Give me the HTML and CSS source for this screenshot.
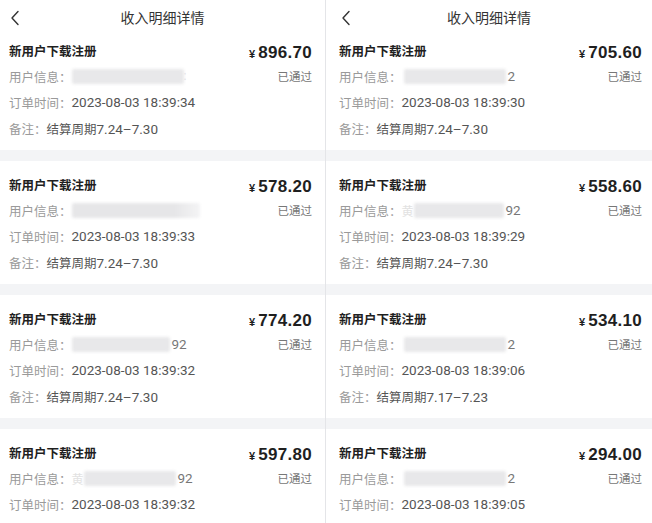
FILE: index.html
```html
<!DOCTYPE html>
<html lang="zh">
<head>
<meta charset="utf-8">
<link rel="stylesheet" href="styles.css">
</head>
<body>
<div class="screen">
  <section class="panel panel-left">
    <header class="topbar">
      <svg class="back" width="10" height="16" viewBox="0 0 10 16"><polyline points="8,1.5 2,8 8,14.5" fill="none" stroke="#333" stroke-width="1.4" stroke-linecap="round" stroke-linejoin="round"/></svg>
      <span class="title">收入明细详情</span>
    </header>
    <div class="card">
      <div class="row"><span class="name">新用户下载注册</span><span class="price"><span class="yen">¥</span>896.70</span></div>
      <div class="row"><span class="label">用户信息：</span><span class="blur b-a"></span><span class="tail faint">:</span><span class="status">已通过</span></div>
      <div class="row"><span class="label">订单时间：</span><span class="value">2023-08-03 18:39:34</span></div>
      <div class="row"><span class="label">备注：</span><span class="note">结算周期<span class="num">7.24–7.30</span></span></div>
    </div>
    <div class="card">
      <div class="row"><span class="name">新用户下载注册</span><span class="price"><span class="yen">¥</span>578.20</span></div>
      <div class="row"><span class="label">用户信息：</span><span class="blur b-b"></span><span class="status">已通过</span></div>
      <div class="row"><span class="label">订单时间：</span><span class="value">2023-08-03 18:39:33</span></div>
      <div class="row"><span class="label">备注：</span><span class="note">结算周期<span class="num">7.24–7.30</span></span></div>
    </div>
    <div class="card">
      <div class="row"><span class="name">新用户下载注册</span><span class="price"><span class="yen">¥</span>774.20</span></div>
      <div class="row"><span class="label">用户信息：</span><span class="blur b-c"></span><span class="tail">92</span><span class="status">已通过</span></div>
      <div class="row"><span class="label">订单时间：</span><span class="value">2023-08-03 18:39:32</span></div>
      <div class="row"><span class="label">备注：</span><span class="note">结算周期<span class="num">7.24–7.30</span></span></div>
    </div>
    <div class="card">
      <div class="row"><span class="name">新用户下载注册</span><span class="price"><span class="yen">¥</span>597.80</span></div>
      <div class="row"><span class="label">用户信息：</span><span class="tail faint">黄</span><span class="blur b-d"></span><span class="tail">92</span><span class="status">已通过</span></div>
      <div class="row"><span class="label">订单时间：</span><span class="value">2023-08-03 18:39:32</span></div>
    </div>
  </section>
  <section class="panel panel-right">
    <header class="topbar">
      <svg class="back" width="10" height="16" viewBox="0 0 10 16"><polyline points="8,1.5 2,8 8,14.5" fill="none" stroke="#333" stroke-width="1.4" stroke-linecap="round" stroke-linejoin="round"/></svg>
      <span class="title">收入明细详情</span>
    </header>
    <div class="card">
      <div class="row"><span class="name">新用户下载注册</span><span class="price"><span class="yen">¥</span>705.60</span></div>
      <div class="row"><span class="label">用户信息：</span><span class="blur b-e"></span><span class="tail">2</span><span class="status">已通过</span></div>
      <div class="row"><span class="label">订单时间：</span><span class="value">2023-08-03 18:39:30</span></div>
      <div class="row"><span class="label">备注：</span><span class="note">结算周期<span class="num">7.24–7.30</span></span></div>
    </div>
    <div class="card">
      <div class="row"><span class="name">新用户下载注册</span><span class="price"><span class="yen">¥</span>558.60</span></div>
      <div class="row"><span class="label">用户信息：</span><span class="tail faint">黄</span><span class="blur b-f"></span><span class="tail">92</span><span class="status">已通过</span></div>
      <div class="row"><span class="label">订单时间：</span><span class="value">2023-08-03 18:39:29</span></div>
      <div class="row"><span class="label">备注：</span><span class="note">结算周期<span class="num">7.24–7.30</span></span></div>
    </div>
    <div class="card">
      <div class="row"><span class="name">新用户下载注册</span><span class="price"><span class="yen">¥</span>534.10</span></div>
      <div class="row"><span class="label">用户信息：</span><span class="blur b-e"></span><span class="tail">2</span><span class="status">已通过</span></div>
      <div class="row"><span class="label">订单时间：</span><span class="value">2023-08-03 18:39:06</span></div>
      <div class="row"><span class="label">备注：</span><span class="note">结算周期<span class="num">7.17–7.23</span></span></div>
    </div>
    <div class="card">
      <div class="row"><span class="name">新用户下载注册</span><span class="price"><span class="yen">¥</span>294.00</span></div>
      <div class="row"><span class="label">用户信息：</span><span class="blur b-e"></span><span class="tail">2</span><span class="status">已通过</span></div>
      <div class="row"><span class="label">订单时间：</span><span class="value">2023-08-03 18:39:05</span></div>
    </div>
  </section>
</div>
</body>
</html>
```
FILE: styles.css
```css
html, body {
  margin: 0;
  padding: 0;
  background: #f3f4f6;
  overflow: hidden;
}
body {
  font-family: "Roboto", "Noto Sans CJK SC", sans-serif;
  width: 652px;
  height: 523px;
}
.screen {
  display: flex;
  height: 523px;
  overflow: hidden;
}
.panel {
  display: flex;
  flex-direction: column;
  gap: 11px;
  background: #f3f4f6;
}
.panel-left {
  width: 326px;
  border-right: 1px solid #e4e5e8;
  box-sizing: border-box;
}
.panel-right {
  width: 326px;
}
.topbar {
  position: relative;
  height: 27px;
  box-sizing: border-box;
  padding-top: 8px;
  background: #fff;
  text-align: center;
  margin-bottom: -11px;
}
.back {
  position: absolute;
  left: 10px;
  top: 10px;
}
.panel-right .back { left: 15px; }
.title {
  display: block;
  line-height: 20px;
  font-size: 14px;
  color: #333;
}
.card {
  background: #fff;
  height: 123px;
  box-sizing: border-box;
  padding: 10px 13px 9px 9px;
  flex-shrink: 0;
}
.panel-right .card {
  padding-left: 13px;
  padding-right: 10px;
}
.row {
  display: flex;
  align-items: center;
  height: 26px;
  font-size: 12.5px;
  white-space: nowrap;
}
.name {
  font-size: 12.5px;
  font-weight: bold;
  color: #1f1f1f;
  flex: 1;
}
.price {
  font-family: "Liberation Sans", "Roboto", sans-serif;
  font-weight: bold;
  font-size: 17px;
  color: #1f1f1f;
  letter-spacing: 0.3px;
  padding-top: 6px;
}
.yen {
  font-size: 11px;
  margin-right: 3px;
  letter-spacing: 0;
}
.label {
  color: #9a9a9a;
}
.value {
  color: #555;
  font-size: 13.5px;
}
.note {
  color: #555;
  font-size: 12.5px;
}
.num {
  font-size: 13.5px;
}
.tail {
  color: #777;
  font-size: 13.5px;
}
.faint { color: #e2e2e2; font-size: 12px; }
.status {
  margin-left: auto;
  color: #777;
  font-size: 11.5px;
}
.blur {
  display: inline-block;
  height: 15px;
  background: #e8e8ea;
  filter: blur(1.5px);
  border-radius: 2px;
}
.b-a { width: 112px; }
.b-b { width: 128px; background: linear-gradient(90deg, #e6e6e8 0%, #e6e6e8 80%, #f4f4f5 100%); }
.b-c { width: 98px; margin-right: 2px; }
.b-d { width: 92px; margin-left: 0; margin-right: 2px; }
.b-e { width: 102px; margin-left: 2px; margin-right: 2px; }
.b-f { width: 90px; margin-right: 2px; }
```
